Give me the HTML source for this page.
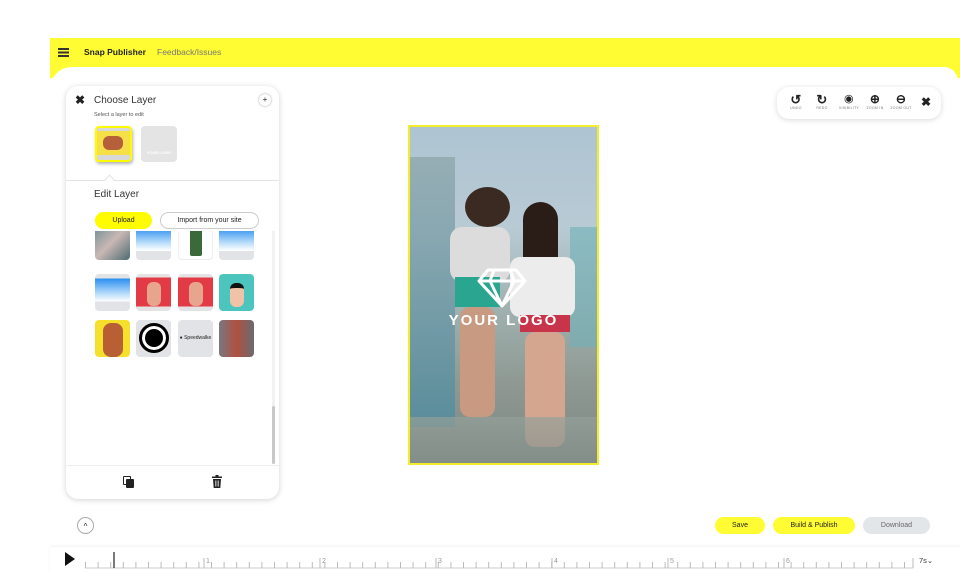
<!DOCTYPE html>
<html><head><style>
*{box-sizing:border-box;margin:0;padding:0}
body{width:960px;height:572px;background:#fff;font-family:"Liberation Sans",sans-serif;position:relative;overflow:hidden;color:#222}
.abs{position:absolute}
.bar{left:50px;top:38px;width:910px;height:40px;background:#fffc33}
.main{left:50px;top:67px;width:908px;height:480px;background:#fff;border-radius:22px 14px 0 0}
.panel{left:66px;top:86px;width:213px;height:413px;background:#fff;border-radius:12px;box-shadow:0 1px 6px rgba(0,0,0,.18)}
.th{position:absolute;width:35px;height:37px;border-radius:4px;overflow:hidden;background:#e1e3e6}
.sky{background:linear-gradient(#e1e3e6 0 12%,#2a8ef0 12%,#bfe0fb 55%,#fff 75%,#e1e3e6 75%)}
.btn{position:absolute;border-radius:10px;font-size:7px;text-align:center;line-height:17px;height:17px}
.tool{position:absolute;top:93px;text-align:center;width:24px;font-size:3.5px;color:#777;letter-spacing:.3px}
</style></head><body>
<div class="abs bar"></div>
<div class="abs" style="left:58px;top:48px;width:11px;height:1.5px;background:#333;box-shadow:0 3.5px 0 #333,0 7px 0 #333"></div>
<div class="abs" style="left:84px;top:47px;font-size:8.5px;font-weight:bold;color:#222">Snap Publisher</div>
<div class="abs" style="left:157px;top:47px;font-size:8.5px;color:#777">Feedback/Issues</div>
<div class="abs main"></div>

<div class="abs panel">
 <div class="abs" style="left:9px;top:7px;font-size:12px;font-weight:bold">✖</div>
 <div class="abs" style="left:28px;top:9px;font-size:10px;color:#333">Choose Layer</div>
 <div class="abs" style="left:28px;top:26px;font-size:5.5px;color:#555">Select a layer to edit</div>
 <div class="abs" style="left:193px;top:8px;width:12px;height:12px;border-radius:50%;box-shadow:0 0 2px rgba(0,0,0,.4);font-size:8px;text-align:center;line-height:12px">+</div>
 <div class="abs" style="left:29px;top:40px;width:37px;height:36px;border:2px solid #fffc00;border-radius:4px;background:linear-gradient(#d8d8d8 0 10%,#f5e04a 10% 85%,#d8d8d8 85%);box-shadow:1px 2px 3px rgba(0,0,0,.3)"><div style="margin:8px 0 0 6px;width:20px;height:14px;background:#b5603a;border-radius:6px"></div></div>
 <div class="abs" style="left:75px;top:40px;width:36px;height:36px;border-radius:4px;background:#e4e4e4;color:#fff;font-size:4px;text-align:center;padding-top:24px;font-weight:bold">YOUR LOGO</div>
 <div class="abs" style="left:0;top:94px;width:213px;height:1px;background:#e4e4e4"></div>
 <div class="abs" style="left:40px;top:90px;width:7px;height:7px;background:#fff;border-left:1px solid #e4e4e4;border-top:1px solid #e4e4e4;transform:rotate(45deg)"></div>
 <div class="abs" style="left:28px;top:103px;font-size:10px;color:#333">Edit Layer</div>
 <div class="btn" style="left:29px;top:126px;width:57px;background:#fffc00">Upload</div>
 <div class="btn" style="left:94px;top:126px;width:99px;border:1px solid #ccc;line-height:15px">Import from your site</div>
 <div class="abs" style="left:0;top:145px;width:213px;height:233px;overflow:hidden">
  <div class="th" style="left:29px;top:-8px;background:linear-gradient(135deg,#6a8a90,#c9b8b5,#4d6a70)"></div>
  <div class="th sky" style="left:70px;top:-8px"></div>
  <div class="th" style="left:112px;top:-8px;background:#fff;border:1px solid #eee"><div style="margin:2px auto;width:12px;height:30px;background:#3b6a3a;border-radius:2px"></div></div>
  <div class="th sky" style="left:153px;top:-8px"></div>
  <div class="th sky" style="left:29px;top:43px"></div>
  <div class="th" style="left:70px;top:43px;background:linear-gradient(#e3e3e3 0 10%,#e33b45 10% 88%,#e3e3e3 88%)"><div style="margin:8px auto;width:14px;height:24px;background:#e8a58d;border-radius:6px"></div></div>
  <div class="th" style="left:112px;top:43px;background:linear-gradient(#e3e3e3 0 10%,#e33b45 10% 88%,#e3e3e3 88%)"><div style="margin:8px auto;width:14px;height:24px;background:#e8a58d;border-radius:6px"></div></div>
  <div class="th" style="left:153px;top:43px;background:#4cc5be"><div style="margin:9px auto;width:14px;height:24px;background:#f0c3a8;border-top:5px solid #111;border-radius:6px"></div></div>
  <div class="th" style="left:29px;top:89px;background:#f5e02c"><div style="margin:3px auto;width:20px;height:34px;background:#b86034;border-radius:8px"></div></div>
  <div class="th" style="left:70px;top:89px"><div style="margin:3px auto;width:30px;height:30px;border:3px solid #000;border-radius:50%;box-shadow:inset 0 0 0 3px #fff,inset 0 0 0 20px #000"></div></div>
  <div class="th" style="left:112px;top:89px;font-size:5px;line-height:37px;text-align:center">● Speedwalke</div>
  <div class="th" style="left:153px;top:89px;background:linear-gradient(90deg,#787880,#b05040,#6a6a70)"></div>
 </div>
 <div class="abs" style="left:206px;top:145px;width:3px;height:233px;background:#f2f2f2"></div>
 <div class="abs" style="left:206px;top:320px;width:3px;height:58px;background:#c8c8c8;border-radius:2px"></div>
 <div class="abs" style="left:0;top:379px;width:213px;height:1px;background:#eee"></div>
 <div class="abs" style="left:57px;top:390px;width:8px;height:9px;border:1.5px solid #222;border-radius:1px"></div>
 <div class="abs" style="left:60px;top:393px;width:8px;height:9px;background:#222;border-radius:1px"></div>
 <svg class="abs" style="left:145px;top:389px" width="12" height="13" viewBox="0 0 12 13"><rect x="1" y="1.5" width="10" height="1.5" fill="#222"/><rect x="4.5" y="0" width="3" height="2" fill="#222"/><path d="M2 4h8l-.7 9H2.7z" fill="#222"/><path d="M4.5 5.5v6M6 5.5v6M7.5 5.5v6" stroke="#fff" stroke-width=".6"/></svg>
</div>

<div class="abs" style="left:408px;top:125px;width:191px;height:340px;border:2px solid #f2ec2a;background:linear-gradient(180deg,#aec4d2 0%,#b8cad4 30%,#9fb0ae 55%,#8f9a94 75%,#7d8783 100%);overflow:hidden">
 <div class="abs" style="left:0;top:30px;width:45px;height:270px;background:linear-gradient(#8fa7ad,#4f8ca0);opacity:.8"></div>
 <div class="abs" style="left:160px;top:100px;width:30px;height:120px;background:#6fb0b8;opacity:.6"></div>
 <div class="abs" style="left:55px;top:60px;width:45px;height:40px;background:#3a2a22;border-radius:50%"></div>
 <div class="abs" style="left:40px;top:100px;width:60px;height:55px;background:#dcdcdc;border-radius:12px"></div>
 <div class="abs" style="left:45px;top:150px;width:45px;height:30px;background:#2aa58f"></div>
 <div class="abs" style="left:50px;top:180px;width:35px;height:110px;background:#c89a82;border-radius:10px"></div>
 <div class="abs" style="left:113px;top:75px;width:35px;height:80px;background:#2a1d18;border-radius:18px 18px 6px 6px"></div>
 <div class="abs" style="left:100px;top:130px;width:65px;height:60px;background:#ececec;border-radius:10px"></div>
 <div class="abs" style="left:110px;top:188px;width:50px;height:17px;background:#c8344a"></div>
 <div class="abs" style="left:115px;top:205px;width:40px;height:115px;background:#d4a690;border-radius:10px"></div>
 <div class="abs" style="left:0;top:290px;width:191px;height:50px;background:linear-gradient(#95a09a,#848e8a);opacity:.7"></div>
 <svg class="abs" style="left:66px;top:140px" width="52" height="42" viewBox="0 0 52 42"><path d="M12 3h28l9 11-23 25L3 14z M3 14h46 M18 3l-4 11 12 25 12-25-4-11" fill="none" stroke="#fff" stroke-width="3" stroke-linejoin="round"/></svg>
 <div class="abs" style="left:0;top:185px;width:187px;text-align:center;color:#fff;font-weight:bold;font-size:15px;letter-spacing:2px">YOUR LOGO</div>
</div>

<div class="abs" style="left:777px;top:87px;width:164px;height:32px;background:#fff;border-radius:12px;box-shadow:0 1px 6px rgba(0,0,0,.15)"></div>
<div class="tool" style="left:784px"><div style="font-size:13px;color:#222;font-weight:bold;line-height:13px">↺</div>UNDO</div>
<div class="tool" style="left:810px"><div style="font-size:13px;color:#222;font-weight:bold;line-height:13px">↻</div>REDO</div>
<div class="tool" style="left:837px"><div style="font-size:11px;color:#222;line-height:13px">◉</div>VISIBILITY</div>
<div class="tool" style="left:863px"><div style="font-size:12px;color:#222;font-weight:bold;line-height:13px">⊕</div>ZOOM IN</div>
<div class="tool" style="left:889px"><div style="font-size:12px;color:#222;font-weight:bold;line-height:13px">⊖</div>ZOOM OUT</div>
<div class="abs" style="left:921px;top:95px;font-size:12px;font-weight:bold">✖</div>

<div class="abs" style="left:77px;top:517px;width:17px;height:17px;border:1px solid #aaa;border-radius:50%;font-size:8px;text-align:center;line-height:17px">^</div>
<div class="btn" style="left:715px;top:517px;width:50px;background:#fffc33">Save</div>
<div class="btn" style="left:773px;top:517px;width:82px;background:#fffc33">Build &amp; Publish</div>
<div class="btn" style="left:863px;top:517px;width:67px;background:#e3e6e8;color:#666">Download</div>

<div class="abs" style="left:50px;top:547px;width:910px;height:25px;background:#fff;box-shadow:0 -1px 3px rgba(0,0,0,.06)"></div>
<div class="abs" style="left:65px;top:552px;width:0;height:0;border-left:10px solid #111;border-top:7px solid transparent;border-bottom:7px solid transparent"></div>
<svg class="abs" style="left:85px;top:550px" width="830" height="20">
 <line x1="0" y1="18" x2="828" y2="18" stroke="#ccc"/>
 <line x1="0" y1="18" x2="828" y2="18" stroke="#bbb" stroke-width="6" stroke-dasharray="1 11.6" transform="translate(0,-3)" />
 <line x1="29" y1="18" x2="29" y2="2" stroke="#222" stroke-width="1.2"/>
 <g stroke="#bbb"><path d="M119 18v-10M235 18v-10M351 18v-10M467 18v-10M583 18v-10M699 18v-10M828 18v-10"/></g>
 <g font-size="7" fill="#999" font-family="Liberation Sans"><text x="121" y="13">1</text><text x="237" y="13">2</text><text x="353" y="13">3</text><text x="469" y="13">4</text><text x="585" y="13">5</text><text x="701" y="13">6</text></g>
</svg>
<div class="abs" style="left:919px;top:556px;font-size:7.5px;color:#333">7s⌄</div>
</body></html>
